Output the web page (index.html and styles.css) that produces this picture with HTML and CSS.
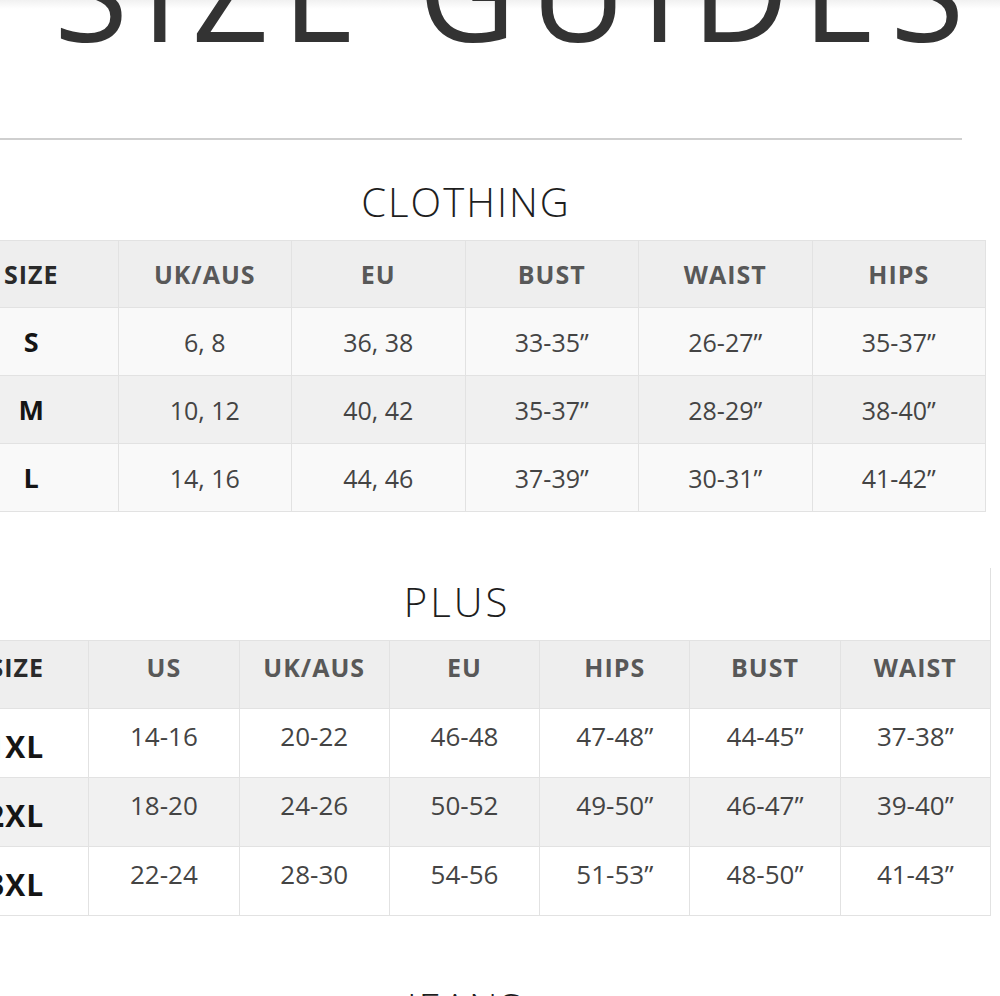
FILE: index.html
```html
<!DOCTYPE html>
<html lang="en">
<head>
<meta charset="utf-8">
<title>Size Guides</title>
<link rel="stylesheet" href="styles.css">
</head>
<body>
<div class="page">
  <h1 class="page-title">SIZE GUIDES</h1>
  <hr class="rule">

  <section class="guide guide-clothing">
    <h2 class="guide-title">CLOTHING</h2>
    <table class="chart chart-clothing">
      <thead>
        <tr><th class="size">SIZE</th><th>UK/AUS</th><th>EU</th><th>BUST</th><th>WAIST</th><th>HIPS</th></tr>
      </thead>
      <tbody>
        <tr><td class="size">S</td><td>6, 8</td><td>36, 38</td><td>33-35”</td><td>26-27”</td><td>35-37”</td></tr>
        <tr><td class="size">M</td><td>10, 12</td><td>40, 42</td><td>35-37”</td><td>28-29”</td><td>38-40”</td></tr>
        <tr><td class="size">L</td><td>14, 16</td><td>44, 46</td><td>37-39”</td><td>30-31”</td><td>41-42”</td></tr>
      </tbody>
    </table>
  </section>

  <section class="guide guide-plus">
    <h2 class="guide-title plus-title">PLUS</h2>
    <table class="chart chart-plus">
      <thead>
        <tr><th class="size">SIZE</th><th>US</th><th>UK/AUS</th><th>EU</th><th>HIPS</th><th>BUST</th><th>WAIST</th></tr>
      </thead>
      <tbody>
        <tr><td class="size">1XL</td><td>14-16</td><td>20-22</td><td>46-48</td><td>47-48”</td><td>44-45”</td><td>37-38”</td></tr>
        <tr><td class="size">2XL</td><td>18-20</td><td>24-26</td><td>50-52</td><td>49-50”</td><td>46-47”</td><td>39-40”</td></tr>
        <tr><td class="size">3XL</td><td>22-24</td><td>28-30</td><td>54-56</td><td>51-53”</td><td>48-50”</td><td>41-43”</td></tr>
      </tbody>
    </table>
  </section>

  <section class="guide guide-jeans">
    <h2 class="guide-title jeans-title">JEANS</h2>
  </section>
</div>
</body>
</html>
```

FILE: styles.css
```css
html, body {
  margin: 0;
  padding: 0;
  background: #ffffff;
}
body {
  width: 1000px;
  height: 996px;
  overflow: hidden;
  font-family: "Open Sans", "Liberation Sans", sans-serif;
  color: #333;
}
.page {
  background: linear-gradient(#f1f1f1 0, #ffffff 9px);
  padding-top: 1px;
}
.page-title {
  margin: -78px 0 0 0;
  padding-left: 54px;
  font-size: 135px;
  line-height: 135px;
  font-weight: 400;
  letter-spacing: 13px;
  color: #333333;
  white-space: nowrap;
}
.rule {
  margin: 80px 0 0 0;
  width: 962px;
  height: 0;
  border: 0;
  border-top: 2px solid #cfcfcf;
}
.guide-title {
  margin: 0;
  font-size: 40px;
  line-height: 48px;
  font-weight: 300;
  letter-spacing: 2px;
  color: #1e1e1e;
  text-align: center;
}
.guide-clothing {
  padding-top: 38px;
}
.guide-clothing .guide-title {
  padding-right: 68px;
}
.chart {
  border-collapse: collapse;
  table-layout: fixed;
  margin-top: 14px;
}
.chart th,
.chart td {
  border: 1px solid #e2e2e2;
  text-align: center;
  vertical-align: middle;
  padding: 0;
  white-space: nowrap;
}
.chart th {
  font-size: 25px;
  font-weight: 700;
  letter-spacing: 1px;
  color: #585858;
  background: #eeeeee;
}
.chart td {
  font-size: 25px;
  font-weight: 400;
  color: #444444;
}
.chart .size {
  color: #151515;
  font-weight: 700;
  font-size: 27px;
}
.chart th.size {
  color: #2a2a2a;
  font-size: 25px;
}

.chart-clothing {
  width: 1042px;
  margin-left: -56px;
}
.chart-clothing thead tr { height: 67px; }
.chart-clothing tbody tr { height: 68px; }
.chart-clothing tbody tr:nth-child(odd) td { background: #f9f9f9; }
.chart-clothing tbody tr:nth-child(even) td { background: #f0f0f0; }

.guide-plus {
  margin-top: 56px;
  margin-left: -62px;
  width: 1052px;
  padding-top: 10px;
  border-right: 1px solid #e0e0e0;
}
.plus-title {
  padding-right: 14px;
  letter-spacing: 3px;
}
.chart-plus {
  width: 1053px;
  margin-top: 14px;
}
.chart-plus thead tr { height: 68px; }
.chart-plus tbody tr { height: 69px; }
.chart-plus th:not(.size),
.chart-plus td:not(.size) {
  padding-bottom: 15px;
}
.chart-plus td {
  font-size: 26px;
}
.chart-plus th.size { padding-bottom: 15px; padding-left: 6px; }
.chart-plus td.size {
  font-size: 30px;
  letter-spacing: 1px;
  padding-top: 6px;
  padding-left: 4px;
}
.chart-plus tbody tr:nth-child(odd) td { background: #ffffff; }
.chart-plus tbody tr:nth-child(even) td { background: #f1f1f1; }

.guide-jeans {
  margin-top: 68px;
}
.jeans-title {
  padding-right: 70px;
}
```
